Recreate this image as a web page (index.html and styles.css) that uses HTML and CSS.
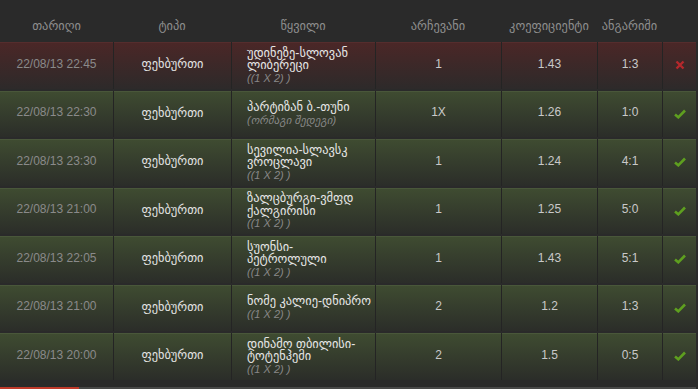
FILE: index.html
```html
<!DOCTYPE html>
<html lang="ka">
<head>
<meta charset="utf-8">
<link rel="stylesheet" href="styles.css">
</head>
<body>
<div class="history">
  <div class="head">
    <div>თარიღი</div>
    <div>ტიპი</div>
    <div>წყვილი</div>
    <div>არჩევანი</div>
    <div>კოეფიციენტი</div>
    <div>ანგარიში</div>
    <div></div>
  </div>

  <div class="row lost">
    <div class="date">22/08/13 22:45</div>
    <div class="type">ფეხბურთი</div>
    <div class="event"><span class="name">უდინეზე-სლოვან ლიბერეცი</span><span class="sub">((1 X 2) )</span></div>
    <div class="num">1</div>
    <div class="num">1.43</div>
    <div class="num">1:3</div>
    <div class="status"><svg width="10" height="10" viewBox="0 0 10 10"><path d="M1.5 1.5 L8.5 8.5 M8.5 1.5 L1.5 8.5" stroke="#b5282c" stroke-width="2.4" stroke-linecap="butt"/></svg></div>
  </div>

  <div class="row won">
    <div class="date">22/08/13 22:30</div>
    <div class="type">ფეხბურთი</div>
    <div class="event"><span class="name">პარტიზან ბ.-თუნი</span><span class="sub">(ორმაგი შედეგი)</span></div>
    <div class="num">1X</div>
    <div class="num">1.26</div>
    <div class="num">1:0</div>
    <div class="status"><svg width="12" height="10" viewBox="0 0 12 10"><path d="M1 5.5 L4.3 8.3 L11 1.5" fill="none" stroke="#5e9f1f" stroke-width="2.6"/></svg></div>
  </div>

  <div class="row won">
    <div class="date">22/08/13 23:30</div>
    <div class="type">ფეხბურთი</div>
    <div class="event"><span class="name">სევილია-სლავსკ ვროცლავი</span><span class="sub">((1 X 2) )</span></div>
    <div class="num">1</div>
    <div class="num">1.24</div>
    <div class="num">4:1</div>
    <div class="status"><svg width="12" height="10" viewBox="0 0 12 10"><path d="M1 5.5 L4.3 8.3 L11 1.5" fill="none" stroke="#5e9f1f" stroke-width="2.6"/></svg></div>
  </div>

  <div class="row won">
    <div class="date">22/08/13 21:00</div>
    <div class="type">ფეხბურთი</div>
    <div class="event"><span class="name">ზალცბურგი-ვმფდ ქალგირისი</span><span class="sub">((1 X 2) )</span></div>
    <div class="num">1</div>
    <div class="num">1.25</div>
    <div class="num">5:0</div>
    <div class="status"><svg width="12" height="10" viewBox="0 0 12 10"><path d="M1 5.5 L4.3 8.3 L11 1.5" fill="none" stroke="#5e9f1f" stroke-width="2.6"/></svg></div>
  </div>

  <div class="row won">
    <div class="date">22/08/13 22:05</div>
    <div class="type">ფეხბურთი</div>
    <div class="event"><span class="name">სუონსი-<br>პეტროლული</span><span class="sub">((1 X 2) )</span></div>
    <div class="num">1</div>
    <div class="num">1.43</div>
    <div class="num">5:1</div>
    <div class="status"><svg width="12" height="10" viewBox="0 0 12 10"><path d="M1 5.5 L4.3 8.3 L11 1.5" fill="none" stroke="#5e9f1f" stroke-width="2.6"/></svg></div>
  </div>

  <div class="row won">
    <div class="date">22/08/13 21:00</div>
    <div class="type">ფეხბურთი</div>
    <div class="event"><span class="name">ნომე კალიე-დნიპრო</span><span class="sub">((1 X 2) )</span></div>
    <div class="num">2</div>
    <div class="num">1.2</div>
    <div class="num">1:3</div>
    <div class="status"><svg width="12" height="10" viewBox="0 0 12 10"><path d="M1 5.5 L4.3 8.3 L11 1.5" fill="none" stroke="#5e9f1f" stroke-width="2.6"/></svg></div>
  </div>

  <div class="row won">
    <div class="date">22/08/13 20:00</div>
    <div class="type">ფეხბურთი</div>
    <div class="event"><span class="name">დინამო თბილისი-ტოტენჰემი</span><span class="sub">((1 X 2) )</span></div>
    <div class="num">2</div>
    <div class="num">1.5</div>
    <div class="num">0:5</div>
    <div class="status"><svg width="12" height="10" viewBox="0 0 12 10"><path d="M1 5.5 L4.3 8.3 L11 1.5" fill="none" stroke="#5e9f1f" stroke-width="2.6"/></svg></div>
  </div>

  <div class="foot">
    <div class="foot-bar"><span class="foot-red"></span></div>
  </div>
</div>
</body>
</html>
```

FILE: styles.css
```css
html, body {
  margin: 0;
  padding: 0;
  background: #2a2a2a;
}
body {
  width: 698px;
  height: 389px;
  overflow: hidden;
  font-family: "Liberation Sans", "DejaVu Sans", sans-serif;
  font-size: 12px;
}
.history {
  width: 696px;
  display: flex;
  flex-direction: column;
  gap: 2px;
}
.head, .row {
  display: grid;
  grid-template-columns: 113px 118px 144px 126px 96px 65px 34px;
}
.head {
  height: 42px;
  align-items: center;
  color: #8e8e8e;
  text-align: center;
  font-size: 12.4px;
  padding-top: 9px;
  box-sizing: border-box;
  margin-bottom: -2px;
}
.row {
  height: 46.5px;
}
.row > div {
  display: flex;
  align-items: center;
  justify-content: center;
  border-left: 1px solid #242424;
  padding-bottom: 3px;
  box-sizing: border-box;
}
.row > div:first-child {
  border-left: none;
}
.won > div {
  background: linear-gradient(#3f4c31, #2b2d29);
  box-shadow: inset 0 1px 0 #49573a;
}
.lost > div {
  background: linear-gradient(#4b2727, #2d2a2a);
  box-shadow: inset 0 1px 0 #552d2d;
}
.date {
  color: #8a8a8a;
}
.row > .type {
  color: #e2e2e2;
  font-size: 12.4px;
}
.num {
  color: #c9c9c9;
}
.row > .event {
  flex-direction: column;
  align-items: flex-start;
  justify-content: center;
  padding: 0 0 0 15px;
  line-height: 12.5px;
  color: #e6e6e6;
}
.name {
  display: block;
  font-size: 12.4px;
}
.sub {
  display: block;
  color: #888;
  font-style: italic;
  font-size: 11px;
}
.row > .status {
  padding-bottom: 0;
}
.foot {
  height: 9px;
  margin-top: -2px;
  display: flex;
  flex-direction: column;
  justify-content: flex-end;
}
.foot-bar {
  height: 2px;
  background: #484848;
  display: flex;
}
.foot-red {
  width: 79px;
  background: #c0392b;
}
```
